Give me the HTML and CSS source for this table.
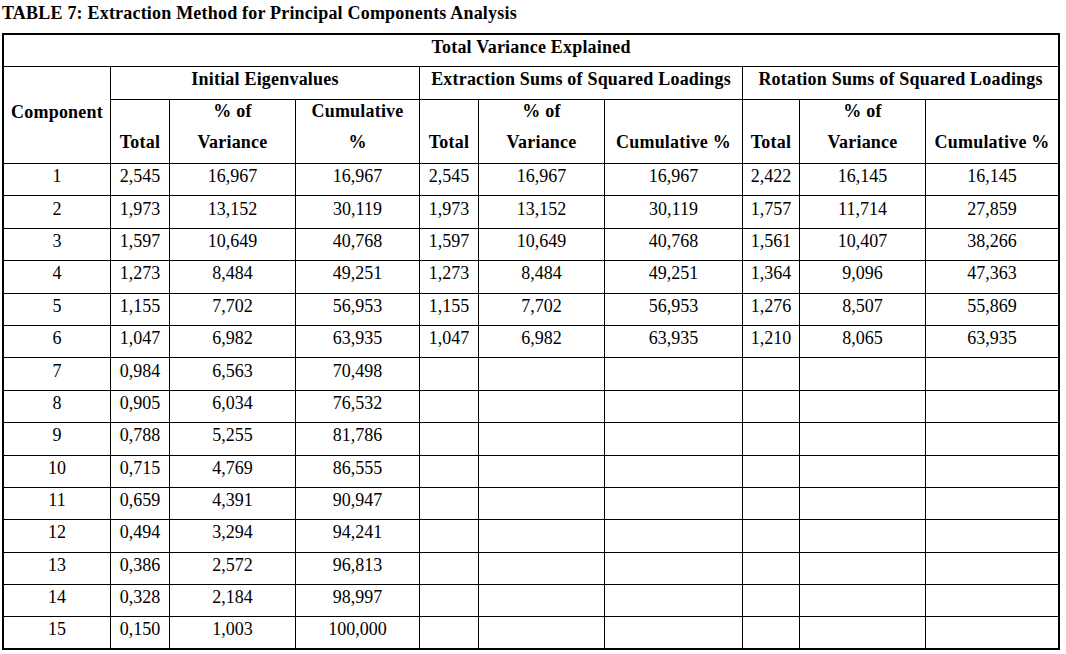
FILE: index.html
```html
<!DOCTYPE html>
<html>
<head>
<meta charset="utf-8">
<title>Table 7</title>
<link rel="stylesheet" href="styles.css">
</head>
<body>
<div class="caption">TABLE 7: Extraction Method for Principal Components Analysis</div>
<table class="tve">
  <colgroup>
    <col class="c-comp">
    <col class="c-tot">
    <col class="c-var">
    <col class="c-cum1">
    <col class="c-tot">
    <col class="c-var">
    <col class="c-cum2">
    <col class="c-tot2">
    <col class="c-var">
    <col class="c-cum3">
  </colgroup>
  <thead>
    <tr class="h1">
      <th colspan="10">Total Variance Explained</th>
    </tr>
    <tr class="h2">
      <th rowspan="2" class="comp">Component</th>
      <th colspan="3">Initial Eigenvalues</th>
      <th colspan="3">Extraction Sums of Squared Loadings</th>
      <th colspan="3">Rotation Sums of Squared Loadings</th>
    </tr>
    <tr class="h3">
      <th class="two"><div class="ln"></div><div class="ln">Total</div></th>
      <th class="two"><div class="ln">% of</div><div class="ln">Variance</div></th>
      <th class="two"><div class="ln">Cumulative</div><div class="ln">%</div></th>
      <th class="two"><div class="ln"></div><div class="ln">Total</div></th>
      <th class="two"><div class="ln">% of</div><div class="ln">Variance</div></th>
      <th class="two"><div class="ln"></div><div class="ln">Cumulative %</div></th>
      <th class="two"><div class="ln"></div><div class="ln">Total</div></th>
      <th class="two"><div class="ln">% of</div><div class="ln">Variance</div></th>
      <th class="two"><div class="ln"></div><div class="ln">Cumulative %</div></th>
    </tr>
  </thead>
  <tbody>
    <tr><td>1</td><td>2,545</td><td>16,967</td><td>16,967</td><td>2,545</td><td>16,967</td><td>16,967</td><td>2,422</td><td>16,145</td><td>16,145</td></tr>
    <tr><td>2</td><td>1,973</td><td>13,152</td><td>30,119</td><td>1,973</td><td>13,152</td><td>30,119</td><td>1,757</td><td>11,714</td><td>27,859</td></tr>
    <tr><td>3</td><td>1,597</td><td>10,649</td><td>40,768</td><td>1,597</td><td>10,649</td><td>40,768</td><td>1,561</td><td>10,407</td><td>38,266</td></tr>
    <tr><td>4</td><td>1,273</td><td>8,484</td><td>49,251</td><td>1,273</td><td>8,484</td><td>49,251</td><td>1,364</td><td>9,096</td><td>47,363</td></tr>
    <tr><td>5</td><td>1,155</td><td>7,702</td><td>56,953</td><td>1,155</td><td>7,702</td><td>56,953</td><td>1,276</td><td>8,507</td><td>55,869</td></tr>
    <tr><td>6</td><td>1,047</td><td>6,982</td><td>63,935</td><td>1,047</td><td>6,982</td><td>63,935</td><td>1,210</td><td>8,065</td><td>63,935</td></tr>
    <tr><td>7</td><td>0,984</td><td>6,563</td><td>70,498</td><td></td><td></td><td></td><td></td><td></td><td></td></tr>
    <tr><td>8</td><td>0,905</td><td>6,034</td><td>76,532</td><td></td><td></td><td></td><td></td><td></td><td></td></tr>
    <tr><td>9</td><td>0,788</td><td>5,255</td><td>81,786</td><td></td><td></td><td></td><td></td><td></td><td></td></tr>
    <tr><td>10</td><td>0,715</td><td>4,769</td><td>86,555</td><td></td><td></td><td></td><td></td><td></td><td></td></tr>
    <tr><td>11</td><td>0,659</td><td>4,391</td><td>90,947</td><td></td><td></td><td></td><td></td><td></td><td></td></tr>
    <tr><td>12</td><td>0,494</td><td>3,294</td><td>94,241</td><td></td><td></td><td></td><td></td><td></td><td></td></tr>
    <tr><td>13</td><td>0,386</td><td>2,572</td><td>96,813</td><td></td><td></td><td></td><td></td><td></td><td></td></tr>
    <tr><td>14</td><td>0,328</td><td>2,184</td><td>98,997</td><td></td><td></td><td></td><td></td><td></td><td></td></tr>
    <tr><td>15</td><td>0,150</td><td>1,003</td><td>100,000</td><td></td><td></td><td></td><td></td><td></td><td></td></tr>
  </tbody>
</table>
</body>
</html>
```

FILE: styles.css
```css
html, body {
  margin: 0;
  padding: 0;
  background: #fff;
}

body {
  font-family: "Liberation Serif", "Times New Roman", serif;
  font-size: 18px;
  line-height: 20px;
  color: #000;
}

.caption {
  font-weight: bold;
  letter-spacing: 0.2px;
  margin: 3px 0 0 2px;
  height: 20px;
  margin-bottom: 10px;
}

.tve {
  margin-left: 2px;
  border-collapse: collapse;
  table-layout: fixed;
  width: 1058px;
  border: 2px solid #000;
}

.c-comp { width: 107.5px; }
.c-tot { width: 59px; }
.c-var { width: 126px; }
.c-cum1 { width: 124px; }
.c-cum2 { width: 138px; }
.c-tot2 { width: 57px; }
.c-cum3 { width: 133.5px; }

.tve th,
.tve td {
  border: 1px solid #000;
  padding: 0 0 7px 0;
  text-align: center;
  vertical-align: middle;
  white-space: nowrap;
}

.tve th {
  font-weight: bold;
  letter-spacing: 0.2px;
}

.tve .h1 th {
  padding-bottom: 8px;
}

.tve .h2 th {
  padding-bottom: 9px;
}

.tve .h2 th.comp {
  padding-bottom: 7px;
}

.tve th.two {
  padding: 0;
}

.ln {
  height: 31px;
}

.h1 { height: 32.5px; }
.h2 { height: 33px; }
.h3 { height: 64px; }

.tve tbody tr {
  height: 32.4px;
}
```
